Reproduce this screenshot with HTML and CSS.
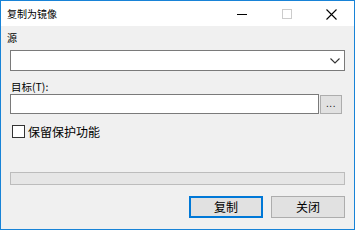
FILE: index.html
```html
<!DOCTYPE html>
<html lang="zh-CN">
<head>
<meta charset="utf-8">
<title>复制为镜像</title>
<link rel="stylesheet" href="styles.css">
</head>
<body>
<div class="window">
  <div class="titlebar">
    <span class="title">复制为镜像</span>
    <div class="controls">
      <div class="ctl"><svg width="10" height="10" viewBox="0 0 10 10"><line x1="0" y1="5.5" x2="10" y2="5.5" stroke="#000" stroke-width="1"/></svg></div>
      <div class="ctl"><svg width="10" height="10" viewBox="0 0 10 10"><rect x="0.5" y="0.5" width="9" height="9" fill="none" stroke="#cccccc" stroke-width="1"/></svg></div>
      <div class="ctl"><svg width="11" height="11" viewBox="0 0 11 11"><path d="M0.5 0.5 L10.5 10.5 M10.5 0.5 L0.5 10.5" stroke="#000" stroke-width="1.1" fill="none"/></svg></div>
    </div>
  </div>
  <div class="content">
    <div class="label src">源</div>
    <div class="combo">
      <svg class="chev" width="10" height="6" viewBox="0 0 10 6"><path d="M0.5 0.5 L5 5 L9.5 0.5" stroke="#333" stroke-width="1.1" fill="none"/></svg>
    </div>
    <div class="label tgt">目标(<u>T</u>):</div>
    <div class="row-input">
      <div class="input"></div>
      <div class="browse">...</div>
    </div>
    <div class="check-row">
      <span class="checkbox"></span>
      <span class="check-label">保留保护功能</span>
    </div>
    <div class="progress"></div>
    <div class="buttons">
      <div class="btn default">复制</div>
      <div class="btn">关闭</div>
    </div>
  </div>
</div>
</body>
</html>
```

FILE: styles.css
```css
* { box-sizing: border-box; }
html, body { margin: 0; padding: 0; }
body {
  width: 355px;
  height: 230px;
  overflow: hidden;
  font-family: "Noto Sans CJK SC", "Noto Sans", sans-serif;
  color: #000;
}
.window {
  width: 355px;
  height: 230px;
  border: 1px solid #1883d7;
  background: #f0f0f0;
  display: flex;
  flex-direction: column;
}
.titlebar {
  height: 25px;
  background: #fff;
  display: flex;
  align-items: center;
  justify-content: space-between;
}
.title {
  font-size: 10px;
  line-height: 12px;
  padding-left: 6px;
  margin-top: 1px;
}
.controls {
  display: flex;
  height: 100%;
}
.ctl {
  width: 45px;
  height: 100%;
  display: flex;
  align-items: center;
  justify-content: center;
}
.ctl svg { display: block; margin-top: 1px; }
.content {
  padding: 0 9px;
  display: flex;
  flex-direction: column;
}
.label {
  font-size: 10px;
  line-height: 12px;
}
.label u { text-decoration: none; }
.src { margin-top: 6px; margin-left: -3px; }
.combo {
  margin-top: 6px;
  height: 21px;
  border: 1px solid #7a7a7a;
  background: #fff;
  display: flex;
  align-items: center;
  justify-content: flex-end;
  padding-right: 4px;
}
.chev { display: block; }
.tgt { margin-top: 10px; padding-left: 1px; font-size: 10.5px; }
.row-input {
  margin-top: 1px;
  display: flex;
  align-items: flex-start;
}
.input {
  width: 309px;
  height: 20px;
  border: 1px solid #7a7a7a;
  background: #fff;
}
.browse {
  margin-left: 1px;
  margin-top: 1px;
  width: 22px;
  height: 19px;
  border: 1px solid #adadad;
  background: #e1e1e1;
  font-family: "Liberation Sans", sans-serif;
  font-size: 10px;
  letter-spacing: 0.5px;
  line-height: 15px;
  text-align: center;
  color: #111;
}
.check-row {
  margin-top: 11px;
  display: flex;
  align-items: center;
  padding-left: 2px;
  height: 13px;
}
.checkbox {
  width: 13px;
  height: 13px;
  border: 1px solid #333;
  background: #fff;
}
.check-label {
  margin-left: 3px;
  font-size: 12px;
  line-height: 13px;
}
.progress {
  margin-top: 34px;
  height: 13px;
  border: 1px solid #bcbcbc;
  background: #e6e6e6;
}
.buttons {
  margin-top: 11px;
  display: flex;
  justify-content: flex-end;
  gap: 8px;
}
.btn {
  width: 74px;
  height: 22px;
  border: 1px solid #adadad;
  background: #e1e1e1;
  font-size: 12px;
  line-height: 20px;
  text-align: center;
}
.btn.default {
  border: 2px solid #0078d7;
  line-height: 18px;
}
```
